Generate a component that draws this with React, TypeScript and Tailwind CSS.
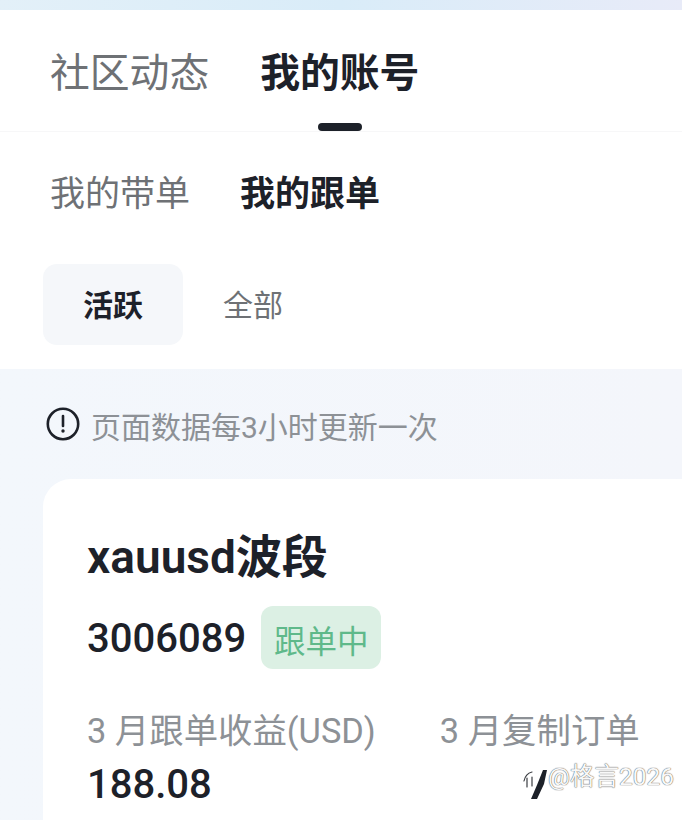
import React from 'react'

const font = "font-['Roboto','Noto_Sans_CJK_SC',sans-serif]"

function InfoIcon() {
  return (
    <svg width="34" height="34" viewBox="0 0 34 34" fill="none">
      <circle cx="17" cy="17" r="15.2" stroke="#1d2129" strokeWidth="2.6" />
      <path d="M17 9v10" stroke="#1d2129" strokeWidth="2.6" strokeLinecap="round" />
      <circle cx="17" cy="24" r="1.7" fill="#1d2129" />
    </svg>
  )
}

function Watermark() {
  return (
    <div className="absolute left-[521px] top-[762px] flex items-start">
      <svg width="27" height="40" viewBox="0 0 27 40" fill="none">
        <path d="M22 8h4l-3 14-7 15h-6l6-14z" fill="#1d2129" />
        <path d="M3 19c1-5 4-8 8-9M6 16v9M2 25l4-3M11 15v9" stroke="#ffffff" strokeWidth="2.4" strokeLinecap="round" />
        <path d="M3 19c1-5 4-8 8-9M6 16v9M11 15v9" stroke="#3a3d42" strokeWidth="1.2" strokeLinecap="round" />
      </svg>
      <span className="text-[24.5px] leading-[30px] text-[#f8f8f8] [text-shadow:0_0_1px_#555,0_0_1px_#777]">@格言2026</span>
    </div>
  )
}

export default function App() {
  return (
    <div className={`${font} relative h-[820px] w-[682px] overflow-hidden bg-[#f4f6fb]`}>
      <div className="h-[10px] bg-gradient-to-r from-[#e3f0f8] via-[#d9ecf8] to-[#e8ebf8]" />

      <div className="bg-white">
        <div className="flex h-[122px] gap-[51px] border-b border-[#f7f7f8] pl-[50px] pt-[36px] text-[39.8px] leading-[56px]">
          <span className="text-[#6e7175]">社区动态</span>
          <div className="relative h-[85px] font-bold text-[#1d2129]">
            我的账号
            <div className="absolute left-[58px] top-[77px] h-[8px] w-[44px] rounded-full bg-[#1d2129]" />
          </div>
        </div>

        <div className="flex gap-[50px] pl-[50px] pt-[39px] text-[35px] leading-[48px]">
          <span className="text-[#6e7175]">我的带单</span>
          <span className="font-bold text-[#1d2129]">我的跟单</span>
        </div>

        <div className="flex items-center gap-[40px] pb-[24px] pl-[43px] pt-[45px] text-[30px] leading-[42px]">
          <div className="flex h-[81px] w-[140px] items-center justify-center rounded-[14px] bg-[#f5f7fa] pt-[2px] font-bold text-[#1d2129]">活跃</div>
          <span className="pt-[2px] text-[#6e7175]">全部</span>
        </div>
      </div>

      <div className="bg-gradient-to-r from-[#f3f7fc] to-[#f4f6fb] pl-[43px]">
        <div className="flex items-center gap-[11px] pl-[3px] pt-[32px] text-[30px] leading-[38px] text-[#8d9196]">
          <InfoIcon />
          <span className="pt-[8px]">页面数据每3小时更新一次</span>
        </div>

        <div className="mt-[32px] h-[400px] rounded-tl-[28px] bg-white pl-[44px] pt-[49px]">
          <div className="text-[46px] font-semibold leading-[58px] text-[#1d2129]">xauusd波段</div>
          <div className="mt-[20px] flex items-center gap-[15px]">
            <span className="pt-[2px] text-[40px] font-medium leading-[56px] text-[#1d2129]">3006089</span>
            <span className="flex h-[63px] w-[120px] items-center justify-center rounded-[12px] bg-[#dcf0e4] pt-[10px] text-[31.5px] leading-[44px] text-[#5fb98a]">跟单中</span>
          </div>
          <div className="mt-[38px] flex gap-[64px]">
            <div className="flex flex-col">
              <span className="text-[34.4px] leading-[48px] text-[#8d9196]">3 月跟单收益(USD)</span>
              <span className="mt-[2px] text-[40px] font-medium leading-[56px] text-[#1d2129]">188.08</span>
            </div>
            <span className="text-[34.4px] leading-[48px] text-[#8d9196]">3 月复制订单</span>
          </div>
        </div>
      </div>

      <Watermark />
    </div>
  )
}
